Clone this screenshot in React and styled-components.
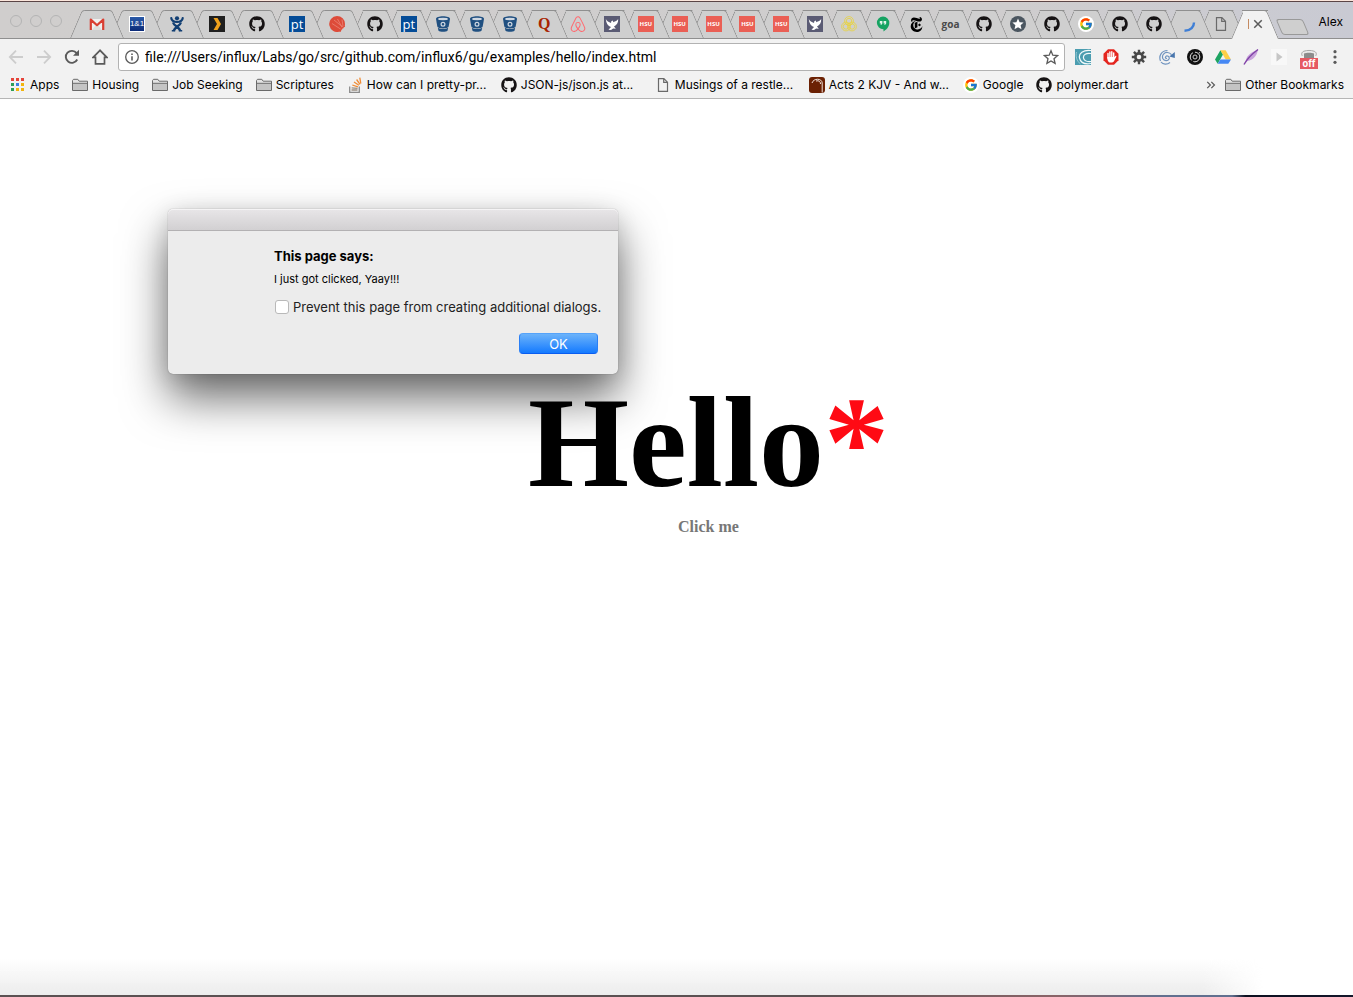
import React from 'react';
import styled, { createGlobalStyle, css } from 'styled-components';
import { FaGithub, FaAirbnb } from 'react-icons/fa';
import { FcGoogle } from 'react-icons/fc';
import { SiNewyorktimes } from 'react-icons/si';

const UI_FONT = 'Inter, "Liberation Sans", sans-serif';

const GlobalStyle = createGlobalStyle`
  *, *::before, *::after { box-sizing: border-box; }
  body { margin: 0; background: #fff; font-family: ${UI_FONT}; color: #000; }
  button { padding: 0; border: 0; background: none; font: inherit; color: inherit; }
  a { color: inherit; text-decoration: none; }
`;

/* ---------- window ---------- */

const Window = styled.div`
  position: relative;
  display: flex;
  flex-direction: column;
  min-height: 100vh;
  border-bottom: 2px solid;
  border-image: linear-gradient(90deg, #5b5152 0%, #5b5152 60%, #8a6468 78%, #61708f 86%, #61708f 91%, #0d1020 92%, #14172b 100%) 1;
`;

const TabStrip = styled.header`
  display: flex;
  align-items: flex-end;
  height: 39px;
  border-top: 1px solid #fbe6dc;
  border-bottom: 1px solid #8f8f8f;
  background: linear-gradient(#5b4546, #5b4546) 0 0 / 100% 1px no-repeat,
    linear-gradient(90deg, #d0cecd 0%, #cfcdce 75%, #c9cad3 100%);
`;

const Lights = styled.div`
  display: flex;
  gap: 8px;
  width: 70px;
  padding: 0 0 11px 10px;
`;

const Light = styled.button`
  width: 12px;
  height: 12px;
  border: 1px solid #b4b4b4;
  border-radius: 50%;
`;

const PinnedTabs = styled.div`
  display: flex;
  width: 281px;
`;

const OpenTabs = styled.div`
  display: flex;
  flex: 1;
  min-width: 0;
`;

const TabButton = styled.button`
  position: relative;
  z-index: ${p => (p.$active ? 50 : 40 - p.$order)};
  display: flex;
  align-items: center;
  justify-content: center;
  height: 28px;
  margin: 0 -14px 0 0;
  ${p => (p.$pinned ? css`flex: 0 0 54px;` : css`flex: 1 1 0; min-width: 0;`)}

  &::before, &::after {
    content: '';
    position: absolute;
    top: 0;
    bottom: ${p => (p.$active ? '-1px' : '0')};
    width: 52%;
    border-top: 1px solid #8f8f8f;
    background: ${p => (p.$active ? '#f2f2f2' : '#cfcfcf')};
  }
  &::before {
    left: 0;
    border-left: 1px solid #8f8f8f;
    border-top-left-radius: 3px;
    transform: skewX(-23deg);
    transform-origin: bottom left;
  }
  &::after {
    right: 0;
    border-right: 1px solid #8f8f8f;
    border-top-right-radius: 3px;
    transform: skewX(23deg);
    transform-origin: bottom right;
  }
`;

const TabFace = styled.span`
  position: relative;
  z-index: 1;
  display: flex;
  align-items: center;
  justify-content: center;
  gap: 4px;
`;

const TitleSliver = styled.span`
  width: 1px;
  height: 10px;
  background: #c58b62;
`;

const StripEnd = styled.div`
  display: flex;
  align-items: center;
  justify-content: space-between;
  width: 88px;
  height: 37px;
  padding: 0 10px 0 14px;
`;

const NewTab = styled.button`
  width: 27px;
  height: 16px;
  margin-top: 14px;
  border: 1px solid #999;
  border-radius: 3px;
  background: #cfcfcf;
  transform: skewX(23deg);
`;

const Profile = styled.button`
  padding-top: 4px;
  font-size: 12px;
  line-height: 16px;
`;

/* ---------- toolbar ---------- */

const Toolbar = styled.nav`
  display: flex;
  align-items: center;
  height: 36px;
  padding: 0 8px 0 2px;
  background: #f2f2f2;
`;

const ToolButton = styled.button`
  display: flex;
  align-items: center;
  justify-content: center;
  flex: none;
  width: ${p => p.$width || 28}px;
  height: 28px;
  color: ${p => (p.disabled ? '#cdcdcd' : '#5a5a5a')};
`;

const AddressBar = styled.label`
  display: flex;
  align-items: center;
  flex: 1;
  gap: 6px;
  height: 28px;
  margin: 0 4px;
  padding: 0 5px 0 6px;
  border: 1px solid #b2b2b2;
  border-radius: 3px;
  background: #fff;
  color: #5a5a5a;
`;

const AddressInput = styled.input`
  flex: 1;
  min-width: 0;
  padding: 0;
  border: 0;
  outline: 0;
  background: none;
  font: 14px/20px Roboto, ${UI_FONT};
  color: #000;
`;

const OffBadge = styled.span`
  position: absolute;
  left: 0;
  top: 9px;
  width: 18px;
  height: 11px;
  background: #e65a63;
  color: #fff;
  font: bold 10px/11px Roboto, ${UI_FONT};
  text-align: center;
`;

const Badged = styled.span`
  position: relative;
  display: flex;
  justify-content: center;
  width: 18px;
  height: 16px;
`;

/* ---------- bookmarks ---------- */

const BookmarkBar = styled.nav`
  display: flex;
  align-items: center;
  height: 24px;
  padding: 0 9px 4px;
  border-bottom: 1px solid #b6b6b6;
  background: #f2f2f2;
  font-size: 12px;
  line-height: 16px;
  white-space: nowrap;
`;

const Bookmark = styled.a`
  display: flex;
  align-items: center;
  flex: none;
  gap: 4px;
  width: ${p => (p.$long ? '154px' : 'auto')};
  padding-right: ${p => (p.$last ? 0 : 13)}px;
`;

const AppsLink = styled(Bookmark)`
  gap: 5px;
`;

const Overflow = styled.button`
  display: flex;
  margin: 0 9px 0 auto;
  color: #5a5a5a;
`;

/* ---------- page ---------- */

const Page = styled.main`
  display: flex;
  flex: 1;
  flex-direction: column;
  align-items: center;
  padding: 268px 0 0 64px;
  font-family: "Liberation Serif", serif;
`;

const Hello = styled.h1`
  margin: 0;
  font-size: 130px;
  line-height: 150px;
`;

const Star = styled.span`
  color: #ff0a14;
`;

const ClickMe = styled.a`
  font-size: 16px;
  font-weight: bold;
  line-height: 20px;
  color: #777;
`;

const BottomShade = styled.div`
  height: 36px;
  margin-right: 90px;
  background: linear-gradient(rgba(236, 236, 236, 0), #ececec);
  mask-image: linear-gradient(90deg, #000 calc(100% - 60px), transparent);
`;

/* ---------- dialog ---------- */

const Dialog = styled.section`
  position: absolute;
  left: 168px;
  top: 209px;
  z-index: 60;
  width: 450px;
  border-radius: 5px;
  background: #ececec;
  box-shadow: 0 0 1px rgba(0, 0, 0, 0.5), 0 24px 46px rgba(0, 0, 0, 0.58), 0 4px 22px rgba(0, 0, 0, 0.12);
`;

const DialogTitleBar = styled.div`
  height: 22px;
  border-bottom: 1px solid #b3b1b3;
  border-radius: 5px 5px 0 0;
  background: linear-gradient(#e8e6e8, #d2d0d2);
  box-shadow: inset 0 1px 0 #f5f4f5;
`;

const DialogBody = styled.div`
  display: flex;
  flex-direction: column;
  padding: 16px 20px 20px 106px;
`;

const DialogHeading = styled.h2`
  margin: 0 0 6px;
  font-size: 13px;
  font-weight: 700;
  line-height: 18px;
`;

const DialogText = styled.p`
  margin: 0 0 12px;
  font-size: 11px;
  line-height: 16px;
`;

const Check = styled.label`
  display: flex;
  align-items: center;
  gap: 4px;
  font-size: 13px;
  line-height: 16px;
  white-space: nowrap;
  color: #222;
`;

const CheckBox = styled.input`
  appearance: none;
  flex: none;
  width: 14px;
  height: 14px;
  margin: 0 0 0 1px;
  border: 1px solid #b9b9b9;
  border-radius: 3px;
  background: #fff;
`;

const OkButton = styled.button`
  align-self: flex-end;
  width: 79px;
  height: 21px;
  margin-top: 18px;
  border: 1px solid #2a7ff5;
  border-top-color: #55a3fa;
  border-bottom-color: #0a5df0;
  border-radius: 4px;
  background: linear-gradient(#6cb3fa, #147aff);
  color: #fff;
  font-size: 13px;
  line-height: 18px;
`;

/* ---------- icons ---------- */

const Tile = styled.span`
  display: flex;
  align-items: center;
  justify-content: center;
  flex: none;
  width: 16px;
  height: 16px;
  background: ${p => p.$bg || 'none'};
  color: ${p => p.$ink || '#fff'};
  border: ${p => (p.$frame ? '1px solid #fff' : '0')};
  font: ${p => p.$font};
`;

const RoundTile = styled(Tile)`
  border-radius: 50%;
  background: #fff;
`;

const Svg = ({ size = 16, children, ...rest }) => (
  <svg width={size} height={size} viewBox="0 0 16 16" fill="none" aria-hidden="true" {...rest}>{children}</svg>
);

const Gmail = () => (
  <Svg>
    <path d="M1 3h14v11H1z" fill="#f0efef" />
    <path d="M3 14l4-5 1 1 1-1 4 5z" fill="#dedede" />
    <path d="M1.800 14V3.600L8 9.200l6.200-5.600V14" stroke="#d93f33" strokeWidth="2.200" strokeLinejoin="round" />
  </Svg>
);
const OneAndOne = () => <Tile $bg="linear-gradient(#2a5aa8, #0b2a78)" $frame $font='8px/14px "Liberation Sans", sans-serif'>1&amp;1</Tile>;
const Jira = () => (
  <Svg>
    <circle cx="8" cy="2.300" r="2.100" fill="#123f73" />
    <path d="M2.300 2.200C2.600 5 5 6 8 6s5.400-1 5.700-3.800" stroke="#123f73" strokeWidth="2.200" strokeLinecap="round" />
    <path d="M4 6.500c1 3.500 6 4 7.500 8.500M12 6.500c-1 3.500-6 4-7.500 8.500" stroke="#123f73" strokeWidth="2.300" />
    <path d="M2.800 14.800h3.400M9.800 14.800h3.400" stroke="#123f73" strokeWidth="1.600" />
  </Svg>
);
const Plex = () => (
  <Svg><path d="M0 0h16v16H0z" fill="#1f1f1f" /><path d="M4.500 2H8.500L12 8l-3.500 6h-4L8 8z" fill="#f0a11c" /></Svg>
);
const Pt = () => <Tile $bg="#044c97" $font='13px/14px "Open Sans", sans-serif'>pt</Tile>;
const RedBall = () => (
  <Svg>
    <path d="M8 0a8 8 0 0 1 8 8c0 1-.2 2-.6 3L11 15.500A8 8 0 1 1 8 0z" fill="#dd4b39" />
    <path d="M5 4l10 8M8.500 3l5.500 10M3 7.500l10 6.500M13 3.500l1.200 8" stroke="#ec8d80" strokeWidth=".7" />
    <path d="M16 10l-3.500 2L11 16" stroke="#dd4b39" strokeWidth="1" />
  </Svg>
);
const Bucket = () => (
  <Svg>
    <path d="M1 3C1 1.200 4.200.3 8 .3S15 1.200 15 3l-1.300 7.500c-.4 1.300-2.600 2-5.700 2s-5.300-.7-5.700-2z" fill="#205081" />
    <ellipse cx="8" cy="3" rx="5" ry="1.200" fill="#cfd8e2" />
    <circle cx="8" cy="8.200" r="1.900" stroke="#cfd8e2" strokeWidth="1.200" />
    <path d="M2.800 11.800c2.400 1.600 8 1.600 10.400 0L12.500 14.800c-1.500 1.300-7.500 1.300-9 0z" fill="#205081" />
  </Svg>
);
const Quora = () => <Tile $ink="#a82400" $font='bold 16px/16px "Liberation Serif", serif'>Q</Tile>;
const Bird = () => (
  <Svg>
    <path d="M0 0h16v16H0z" fill="#5a5b74" />
    <path d="M1.800 3c1 2.200 3 3 5.200 4l.3-1.800 1.500-.7.600 1.700C11 5.500 13.500 4.500 14.200 3c.2 4-1.600 6-4.200 7.500l1.800 2.300-2.600-.4L7 14l-2.500-.3L7 11C4 10 2 7 1.800 3z" fill="#fff" />
  </Svg>
);
const Hsu = () => <Tile $bg="#ea5f55" $font='bold 6px/16px "Open Sans", sans-serif'>HSU</Tile>;
const Rings = () => (
  <Svg stroke="#e8d33c" strokeWidth=".8">
    <circle cx="8" cy="5" r="4.400" /><circle cx="5" cy="10.500" r="4.400" /><circle cx="11" cy="10.500" r="4.400" />
    <circle cx="8" cy="5" r="2.700" /><circle cx="5" cy="10.500" r="2.700" /><circle cx="11" cy="10.500" r="2.700" />
  </Svg>
);
const Hangouts = () => (
  <Svg>
    <path d="M8 .5a6.300 6.300 0 0 1 6.300 6.500C14.300 11 11 14 8.500 15.500V13.200A6.300 6.300 0 0 1 8 .5z" fill="#16a362" />
    <path d="M4.800 5h2.600v2.600L6.200 9H5.500l.6-1.400H4.800zM8.600 5h2.600v2.600L10 9h-.7l.6-1.400H8.600z" fill="#e6f4ec" />
  </Svg>
);
const Goa = () => <Tile $ink="#4a4a4a" $font='bold 10px/12px "Open Sans", sans-serif'>goa</Tile>;
const StarBall = () => (
  <Svg>
    <circle cx="8" cy="8" r="8" fill="#4b5660" />
    <path d="M8 2.500l1.600 3.700 4 .4-3 2.700.9 4L8 11.200l-3.500 2.100.9-4-3-2.700 4-.4z" fill="#fff" />
  </Svg>
);
const GoogleBall = () => <RoundTile><FcGoogle size={14} /></RoundTile>;
const Spinner = () => <Svg><path d="M14 6.500c0 4-3 8-9.500 8.300" stroke="#3f7fd6" strokeWidth="2.400" /></Svg>;
const Doc = () => <Svg stroke="#6a6a6a" strokeWidth="1.200"><path d="M3.500 1.600h5.400l3.600 3.600v9.200h-9zM8.700 1.800v3.600h3.600" /></Svg>;
const Close = () => <Svg size={10}><path d="M2 2l12 12M14 2L2 14" stroke="#5a5a5a" strokeWidth="2.400" /></Svg>;

const Arrow = ({ flip }) => (
  <Svg stroke="currentColor" strokeWidth="1.800">
    <path d={flip ? 'M1 8h13M8 1.600L14.200 8 8 14.400' : 'M15 8H2M8 1.600L1.800 8 8 14.400'} />
  </Svg>
);
const Reload = () => (
  <Svg><path d="M13.200 10.500A6 6 0 1 1 12.600 4.200" stroke="currentColor" strokeWidth="1.900" /><path d="M15 .8v6H9z" fill="currentColor" /></Svg>
);
const Home = () => <Svg><path d="M8 1.300L1.200 8.300h2.300v6.500h9V8.300h2.300z" stroke="currentColor" strokeWidth="1.700" /></Svg>;
const Info = () => (
  <Svg size={14}><circle cx="8" cy="8" r="7.200" stroke="currentColor" strokeWidth="1.500" /><path d="M8 7v5M8 4v1.800" stroke="currentColor" strokeWidth="1.800" /></Svg>
);
const StarOutline = () => (
  <Svg><path d="M8 1.800l1.800 4.400 4.800.4-3.600 3.100 1.100 4.700L8 11.900l-4.100 2.500L5 9.700 1.400 6.600l4.800-.4z" stroke="currentColor" strokeWidth="1.300" /></Svg>
);
const Teal = () => (
  <Svg>
    <path d="M0 0h16v16H0z" fill="#4b9db0" />
    <path d="M16 1.500C8 .5 3.500 4.500 4.500 9s5.500 6.500 11.500 5.500M16 4.500c-5-.8-8 1.500-7.500 4.500s4 3.800 7.500 3.500" stroke="#f3fafb" strokeWidth="1.200" />
    <path d="M1.500 3c-1 4 0 9 4 12" stroke="#a9d2db" strokeWidth=".8" />
  </Svg>
);
const Adblock = () => (
  <Svg>
    <path d="M5 .3h6L15.500 4.800v6.400L11 15.700H5L.5 11.200V4.800z" fill="#e4261f" />
    <path d="M5 9V4.500M6.900 8V3M8.800 8V2.800M10.700 8.500V4" stroke="#fff" strokeWidth="1.400" strokeLinecap="round" />
    <path d="M4.300 8h7.100l1.200-1.200c.7-.2 1 .3.700.9L11 12.300c-.9 1.700-4.800 1.700-5.700.1C4.500 11.200 4.300 9.700 4.300 8z" fill="#fff" />
  </Svg>
);
const Gear = () => (
  <Svg>
    <path d="M8 .8v14.400M.8 8h14.400M2.900 2.900l10.200 10.200M13.100 2.900L2.900 13.100" stroke="#484848" strokeWidth="2.400" />
    <circle cx="8" cy="8" r="5" fill="#484848" /><circle cx="8" cy="8" r="2.300" fill="#f2f2f2" />
  </Svg>
);
const Swirl = () => (
  <Svg>
    <path d="M8 9.300c-1.500.5-2-.8-1.200-1.800C8 6 11 7.500 10 10c-1 2.300-5 2.300-6.200-.5C2.500 6 5.500 3.200 8.500 3.500c2 .2 3 1 4 2.200M1.500 12c-2-5 1-10.500 7-10.500M2 13c2 2.500 6 3 9 .5" stroke="#6f93bf" strokeWidth="1.200" />
    <path d="M15.800 3v6l-5.500-1.600z" fill="#4a76ad" />
  </Svg>
);
const Lens = () => (
  <Svg>
    <circle cx="8" cy="8" r="8" fill="#111" /><circle cx="8" cy="8" r="4.800" stroke="#ddd" strokeWidth="1" strokeDasharray="9 2" />
    <circle cx="8" cy="8" r="2" stroke="#ccc" strokeWidth="1" /><path d="M12 3.500l.6.600" stroke="#fff" strokeWidth="1.200" />
  </Svg>
);
const Drive = () => (
  <Svg>
    <path d="M5.400 1.200L0 10.500l2.700 4.300L8 5.600z" fill="#1da462" />
    <path d="M5.400 1.200h5.200L16 10.500h-5.300z" fill="#ffcf48" />
    <path d="M5.400 10.500H16l-2.700 4.300H2.700z" fill="#4688f4" />
  </Svg>
);
const Feather = () => (
  <Svg>
    <path d="M1 15.500L3 11C4 6 9 3 15 .5 14 7 10 11 4.500 12z" fill="#c8a3dc" />
    <path d="M1 15.500C4 10 9 5 15 .5" stroke="#8145a8" strokeWidth="1.400" />
  </Svg>
);
const PlayFaint = () => <Svg><path d="M0 0h16v16H0z" fill="#f8f8f8" /><path d="M5.500 3.500L11.500 8l-6 4.500z" fill="#c6c6c6" /></Svg>;
const Hat = () => (
  <Svg>
    <path d="M1.500 7C0 5.500.5 3 3 2.200c3-1 7-1 10 0 2.500.8 3 3.300 1.500 4.800" stroke="#a8a8a8" strokeWidth="1" fill="#ebebeb" />
    <path d="M3 4.500c2-1 8-1 10 0V9H3z" fill="#8c8c8c" />
  </Svg>
);
const Dots = () => <Svg><circle cx="8" cy="2.700" r="1.600" fill="#5a5a5a" /><circle cx="8" cy="8" r="1.600" fill="#5a5a5a" /><circle cx="8" cy="13.300" r="1.600" fill="#5a5a5a" /></Svg>;
const Apps = () => (
  <Svg>
    {['#e5443a', '#e5443a', '#e5443a', '#2e9e57', '#3f7fe0', '#f2b50f', '#2e9e57', '#f2b50f', '#f2b50f'].map((c, i) => (
      <rect key={i} x={2 + (i % 3) * 5} y={1 + Math.floor(i / 3) * 5} width="3" height="3" fill={c} />
    ))}
  </Svg>
);
const Folder = () => (
  <Svg>
    <path d="M.5 13.500v-10l1-1.200h4.300l1.400 1.900h8.300v9.300z" fill="#e3e3e3" stroke="#6a6a6a" />
    <path d="M1 6.500h14v6.500H1z" fill="#c4c4c4" /><path d="M.5 6.300h15" stroke="#6a6a6a" />
  </Svg>
);
const StackOverflow = () => (
  <Svg>
    <path d="M2.700 9.500v5.800h9.600V9.500" stroke="#8b8b8b" strokeWidth="1.300" />
    <path d="M4.500 13h6M4.600 10.800l6 .6" stroke="#9b8f83" strokeWidth="1.300" />
    <path d="M5.300 8l5.600 1.800M7 5l4.900 3.300M9.600 2.500l3.400 4.800M12.800.7l1 5.800" stroke="#ef8b34" strokeWidth="1.300" />
  </Svg>
);
const Acts = () => (
  <Svg>
    <rect width="16" height="16" rx="3" fill="#6b2104" />
    <path d="M3 6C4.500 1 13 1 13.200 6v9.500M7 4c3-.8 4.500.5 4.500 3" stroke="#f2e5de" strokeWidth="1" />
  </Svg>
);
const Chevrons = () => <Svg size={10}><path d="M2 3l5 5-5 5M8.500 3l5 5-5 5" stroke="currentColor" strokeWidth="2" /></Svg>;
const Octocat = () => <FaGithub size={16} color="#161314" />;
const Airbnb = () => <FaAirbnb size={18} color="#ff6a70" />;
const Times = () => <SiNewyorktimes size={15} color="#000" />;

/* ---------- content ---------- */

const pinned = [
  ['Gmail', Gmail], ['1&1', OneAndOne], ['Jira', Jira], ['Plex', Plex],
  ['GitHub', Octocat], ['pt', Pt], ['Red ball', RedBall],
];

const open = [
  ['GitHub', Octocat], ['pt', Pt], ['Bitbucket', Bucket], ['Bitbucket', Bucket], ['Bitbucket', Bucket],
  ['Quora', Quora], ['Airbnb', Airbnb], ['Bird', Bird], ['HSU', Hsu], ['HSU', Hsu], ['HSU', Hsu],
  ['HSU', Hsu], ['HSU', Hsu], ['Bird', Bird], ['Rings', Rings], ['Hangouts', Hangouts],
  ['New York Times', Times], ['goa', Goa], ['GitHub', Octocat], ['Star', StarBall], ['GitHub', Octocat],
  ['Google', GoogleBall], ['GitHub', Octocat], ['GitHub', Octocat], ['Loading', Spinner], ['Document', Doc],
];

const extensions = [
  ['Waves', Teal], ['Adblock', Adblock], ['Settings', Gear], ['Swirl', Swirl],
  ['Lens', Lens], ['Drive', Drive], ['Feather', Feather], ['Play', PlayFaint],
];

const bookmarks = [
  ['Housing', Folder], ['Job Seeking', Folder], ['Scriptures', Folder],
  ['How can I pretty-pr...', StackOverflow, true], ['JSON-js/json.js at...', Octocat, true],
  ['Musings of a restle...', Doc, true], ['Acts 2 KJV - And w...', Acts, true],
  ['Google', GoogleBall], ['polymer.dart', Octocat],
];

const Tab = ({ label, icon: Icon, order, pinned: isPinned }) => (
  <TabButton aria-label={label} $order={order} $pinned={isPinned}>
    <TabFace><Icon /></TabFace>
  </TabButton>
);

export default function App() {
  return (
    <Window>
      <GlobalStyle />
      <TabStrip>
        <Lights>
          <Light aria-label="Close window" />
          <Light aria-label="Minimise window" />
          <Light aria-label="Zoom window" />
        </Lights>
        <PinnedTabs>
          {pinned.map(([label, icon], i) => <Tab key={i} label={label} icon={icon} order={i} pinned />)}
        </PinnedTabs>
        <OpenTabs>
          {open.map(([label, icon], i) => <Tab key={i} label={label} icon={icon} order={i + 7} />)}
          <TabButton $active aria-label="Current tab">
            <TabFace><TitleSliver /><Close /></TabFace>
          </TabButton>
        </OpenTabs>
        <StripEnd>
          <NewTab aria-label="New tab" />
          <Profile>Alex</Profile>
        </StripEnd>
      </TabStrip>

      <Toolbar aria-label="Navigation">
        <ToolButton disabled aria-label="Back"><Arrow /></ToolButton>
        <ToolButton disabled aria-label="Forward"><Arrow flip /></ToolButton>
        <ToolButton aria-label="Reload"><Reload /></ToolButton>
        <ToolButton aria-label="Home"><Home /></ToolButton>
        <AddressBar>
          <Info />
          <AddressInput
            aria-label="Address"
            defaultValue="file:///Users/influx/Labs/go/src/github.com/influx6/gu/examples/hello/index.html"
          />
          <StarOutline />
        </AddressBar>
        {extensions.map(([label, Icon]) => (
          <ToolButton key={label} aria-label={label}><Icon /></ToolButton>
        ))}
        <ToolButton $width={32} aria-label="Hat extension">
          <Badged><Hat /><OffBadge>off</OffBadge></Badged>
        </ToolButton>
        <ToolButton $width={20} aria-label="Menu"><Dots /></ToolButton>
      </Toolbar>

      <BookmarkBar aria-label="Bookmarks">
        <AppsLink href="#apps"><Apps />Apps</AppsLink>
        {bookmarks.map(([label, Icon, long]) => (
          <Bookmark key={label} href="#bookmark" $long={long}><Icon />{label}</Bookmark>
        ))}
        <Overflow aria-label="More bookmarks"><Chevrons /></Overflow>
        <Bookmark href="#other" $last><Folder />Other Bookmarks</Bookmark>
      </BookmarkBar>

      <Page>
        <Hello>Hello<Star>*</Star></Hello>
        <ClickMe href="#click">Click me</ClickMe>
      </Page>
      <BottomShade />

      <Dialog role="dialog" aria-labelledby="dialog-heading">
        <DialogTitleBar />
        <DialogBody>
          <DialogHeading id="dialog-heading">This page says:</DialogHeading>
          <DialogText>I just got clicked, Yaay!!!</DialogText>
          <Check>
            <CheckBox type="checkbox" />
            Prevent this page from creating additional dialogs.
          </Check>
          <OkButton>OK</OkButton>
        </DialogBody>
      </Dialog>
    </Window>
  );
}
